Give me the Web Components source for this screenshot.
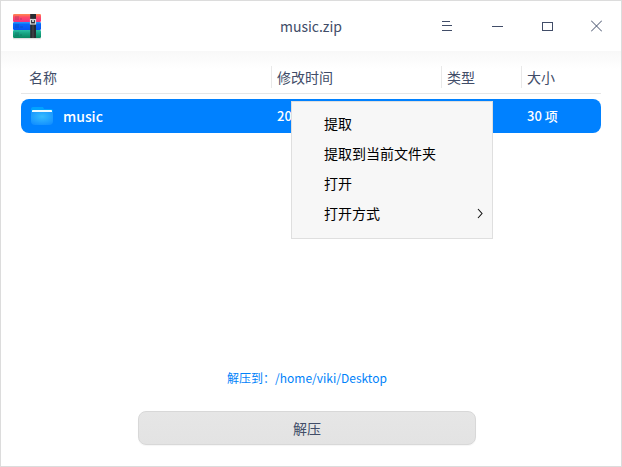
<!DOCTYPE html>
<html lang="zh-CN">
<head>
<meta charset="utf-8">
<title>music.zip</title>
<style>
html,body{margin:0;height:100%;overflow:hidden;background:#fff}
body{font:14px/20px "Noto Sans CJK SC","Noto Sans",sans-serif;color:#414d68}
</style>
</head>
<body>
<archive-window></archive-window>
<script>
function define(name, html) {
  const template = document.createElement('template');
  template.innerHTML = html;
  customElements.define(name, class extends HTMLElement {
    constructor() {
      super();
      this.attachShadow({mode: 'open'}).append(template.content.cloneNode(true));
    }
  });
}

define('archive-logo', `
<style>:host{display:block;width:30px;height:26px}svg{display:block}</style>
<svg width="30" height="26" viewBox="0 0 30 26">
  <defs>
    <linearGradient id="r" x2="0" y2="1"><stop stop-color="#ff8a50"/><stop offset=".4" stop-color="#ff4a68"/><stop offset="1" stop-color="#f03280"/></linearGradient>
    <linearGradient id="b" x2="0" y2="1"><stop stop-color="#2aa0f5"/><stop offset=".3" stop-color="#0666fb"/><stop offset="1" stop-color="#0653f0"/></linearGradient>
    <linearGradient id="g" x2="0" y2="1"><stop stop-color="#2bc0a5"/><stop offset=".4" stop-color="#17a583"/><stop offset="1" stop-color="#088660"/></linearGradient>
  </defs>
  <rect x="1" y="24" width="28" height="1.3" rx=".6" fill="#000" opacity=".13"/>
  <rect x="1" y="0" width="28" height="8" rx="1.3" fill="url(#r)"/>
  <rect x="1" y="8" width="28" height="8" rx="1.3" fill="url(#b)"/>
  <rect x="1" y="16" width="28" height="8" rx="1.3" fill="url(#g)"/>
  <g fill="#182a50" opacity=".14"><path d="M3 2h4v4H3zM8 4h2v2H8zM3 10h4v4H3zM8 12h3v2H8zM3 18h4v4H3zM8 20h2v2H8z"/></g>
  <rect x="18.2" width="5.8" height="24" fill="#292c32"/>
  <rect x="20" y="11" width="2" height="13" fill="#3a3d42"/>
  <rect x="18.5" y="5.5" width="5" height="4.5" fill="#292c32" stroke="#d9d9d9" stroke-width="1.2"/>
  <path d="M20 5.5h2V8h-2z" fill="#c6c6c6"/>
</svg>`);

define('window-controls', `
<style>
:host{display:flex;gap:39px;align-items:center}
svg{display:block;fill:none;stroke:#414d68;shape-rendering:crispEdges}
svg.close{margin-left:-1px;shape-rendering:auto}
</style>
<svg width="11" height="12"><path d="M0 1.5h8M0 5.5h10M0 10.5h10"/></svg>
<svg width="11" height="12"><path d="M0 6.5h11"/></svg>
<svg width="11" height="12"><path d="M.5 2.5h10v8H.5z"/></svg>
<svg class="close" width="11" height="12"><path d="M0 .5l11 11M11 .5l-11 11"/></svg>`);

define('title-bar', `
<style>
:host{display:grid;grid-template-columns:1fr auto 1fr;height:50px;align-items:center;background:#fff}
archive-logo{margin:2px 0 0 11px}
window-controls{justify-self:end;margin-right:19px}
</style>
<archive-logo></archive-logo><span><slot></slot></span><window-controls></window-controls>`);

define('column-head', `
<style>
:host{display:block;box-sizing:border-box;height:22px;padding-left:5px;line-height:23px;border-left:1px solid #e9e9e9}
:host([first]){border-color:transparent;padding-left:7px}
</style><slot></slot>`);

define('folder-icon', `
<style>:host{display:block;width:24px;height:20px}svg{display:block}</style>
<svg width="24" height="20">
  <defs><radialGradient id="f" cx=".5" cy=".35" r=".72"><stop stop-color="#36bcff"/><stop offset="1" stop-color="#128fff"/></radialGradient></defs>
  <path d="M1 7V3q0-2 2-2h10l1 2h7q2 0 2 2v2z" fill="#00a2ff"/>
  <rect x="2" y="4" width="20" height="3" rx=".8" fill="#eefaff"/>
  <path d="M1 6h22v9q0 4-4 4H5q-4 0-4-4z" fill="url(#f)"/>
</svg>`);

define('file-row', `
<style>
:host{display:grid;grid-template-columns:250px 170px 80px 80px;height:34px;align-items:center;border-radius:8px;background:#0081ff;color:#fff;font-weight:500}
.name{display:flex;align-items:center;gap:9px;padding-left:9px;font-size:14px}
.cell{padding-left:6px;font-size:13px}
</style>
<span class="name"><folder-icon></folder-icon><slot name="name"></slot></span>
<span class="cell"><slot name="time"></slot></span><span></span>
<span class="cell"><slot name="size"></slot></span>`);

define('menu-item', `
<style>
:host{display:flex;justify-content:space-between;align-items:center;height:30px;padding:0 9px 0 32px}
svg{display:none}
:host([submenu]) svg{display:block}
</style>
<span><slot></slot></span>
<svg width="7" height="11" fill="none" stroke="#111" stroke-width="1.1"><path d="M2 1l4 4.5L2 10"/></svg>`);

define('context-menu', `
<style>
:host{display:block;box-sizing:border-box;width:202px;height:138px;padding-top:6px;background:#f7f7f7;border:1px solid #dfdfdf;color:#000}
menu-item{margin:0}
</style><slot></slot>`);

define('push-button', `
<style>
:host{display:flex;box-sizing:border-box;width:338px;height:34px;align-items:center;justify-content:center;border:1px solid #d8d8d8;border-radius:8px;background:linear-gradient(#e6e6e6,#e3e3e3);box-shadow:0 1px 1px #0000000a}
</style><slot></slot>`);

define('archive-window', `
<style>
:host{display:flex;flex-direction:column;box-sizing:border-box;width:622px;height:467px;border:1px solid #dcdcdc;background:#fff}
main{flex:1;display:flex;flex-direction:column;padding:15px 20px 0;background:linear-gradient(#f8f8f8,#fff 18px)}
.heads{display:grid;grid-template-columns:250px 170px 80px 80px;padding-bottom:5px;border-bottom:1px solid #e6e6e6}
file-row{margin-top:5px}
.path{margin:auto 0 23px;padding-right:8px;text-align:center;font-size:12px;color:#0082fa}
push-button{margin:0 0 21px 117px}
context-menu{position:absolute;left:291px;top:101px}
</style>
<title-bar>music.zip</title-bar>
<main>
  <div class="heads"><column-head first>名称</column-head><column-head>修改时间</column-head><column-head>类型</column-head><column-head>大小</column-head></div>
  <file-row><span slot="name">music</span><span slot="time">20</span><span slot="size">30 项</span></file-row>
  <div class="path">解压到：/home/viki/Desktop</div>
  <push-button>解压</push-button>
</main>
<context-menu><menu-item>提取</menu-item><menu-item>提取到当前文件夹</menu-item><menu-item>打开</menu-item><menu-item submenu>打开方式</menu-item></context-menu>`);
</script>
</body>
</html>
